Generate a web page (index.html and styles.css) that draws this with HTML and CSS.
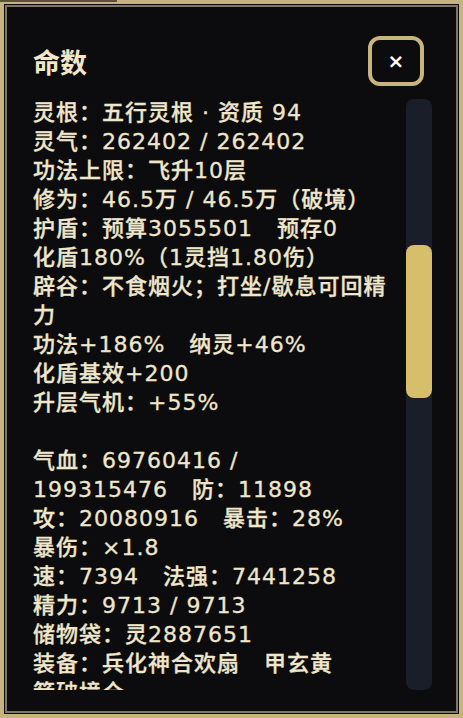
FILE: index.html
```html
<!DOCTYPE html>
<html lang="zh-CN">

<head>
  <meta charset="UTF-8">
  <meta name="viewport" content="width=device-width, initial-scale=1.0">
  <title>命数</title>
  <link rel="stylesheet" href="styles.css">
</head>

<body>

  <div class="panel">
    <header class="panel-head">
      <h1 class="title">命数</h1>
      <button class="close-btn">×</button>
    </header>

    <div class="scroll-area">
      <div class="stats">
        <p>灵根：五行灵根 · 资质 94</p>
        <p>灵气：262402 / 262402</p>
        <p>功法上限：飞升10层</p>
        <p>修为：46.5万 / 46.5万（破境）</p>
        <p>护盾：预算3055501<i class="gap"></i>预存0</p>
        <p>化盾180%（1灵挡1.80伤）</p>
        <p>辟谷：不食烟火；打坐/歇息可回精力</p>
        <p>功法+186%<i class="gap"></i>纳灵+46%</p>
        <p>化盾基效+200</p>
        <p>升层气机：+55%</p>
        <p class="blank"></p>
        <p>气血：69760416 / <span class="nw">199315476<i class="gap"></i>防：11898</span></p>
        <p>攻：20080916<i class="gap"></i>暴击：28%</p>
        <p>暴伤：×1.8</p>
        <p>速：7394<i class="gap"></i>法强：7441258</p>
        <p>精力：9713 / 9713</p>
        <p>储物袋：灵2887651</p>
        <p>装备：兵化神合欢扇<i class="gap"></i>甲玄黄</p>
        <p>箭破境仓</p>
      </div>
      <div class="track">
        <div class="thumb"></div>
      </div>
    </div>
  </div>

</body>

</html>
```

FILE: styles.css
```css
html,
body {
  margin: 0;
  height: 100%;
  background-color: #0c0c0e;
}

.panel {
  position: relative;
  box-sizing: border-box;
  height: 718px;
  display: flex;
  flex-direction: column;
  padding: 32px 27px 0 29px;
  border: 4px solid #c7b37d;
  box-shadow: inset 0 0 0 1px #0c0c0e, inset 0 0 0 3px #7f7766;
  background-color: #0c0c0e;
  font-family: "DejaVu Sans", "Noto Sans CJK SC", sans-serif;
  color: #efe6cb;
}

.panel::before {
  content: "";
  position: absolute;
  top: -4px;
  left: -4px;
  width: 117px;
  height: 2px;
  background-color: #5b5039;
}

.panel-head {
  display: flex;
  justify-content: space-between;
  align-items: center;
  height: 50px;
  margin-right: 8px;
}

.title {
  margin: 0;
  font-family: "Noto Sans CJK SC", sans-serif;
  font-size: 27px;
  font-weight: 700;
  color: #f2e7c6;
}

.close-btn {
  box-sizing: border-box;
  width: 56px;
  height: 50px;
  padding: 0;
  border: 4px solid #c8b47e;
  border-radius: 12px;
  background-color: #0c0c0e;
  color: #ffffff;
  font-family: "DejaVu Sans", sans-serif;
  font-size: 20px;
  font-weight: 700;
  line-height: 1;
  cursor: pointer;
}

.scroll-area {
  display: flex;
  gap: 10px;
  height: 592px;
  margin-top: 12px;
}

.stats {
  width: 363px;
  overflow: hidden;
  font-size: 22px;
  font-weight: 500;
  letter-spacing: 1px;
  line-height: 29px;
  -webkit-text-stroke: 0.3px #efe6cb;
}

.stats p {
  margin: 0;
}

.stats .blank {
  height: 29px;
}

.gap {
  display: inline-block;
  width: 24px;
}

.nw {
  white-space: nowrap;
}

.track {
  width: 26px;
  height: 591px;
  margin-top: 1px;
  border-radius: 8px;
  background-color: #1a1e28;
}

.thumb {
  height: 153px;
  margin-top: 146px;
  border-radius: 8px;
  background-color: #d6be6a;
}
```
